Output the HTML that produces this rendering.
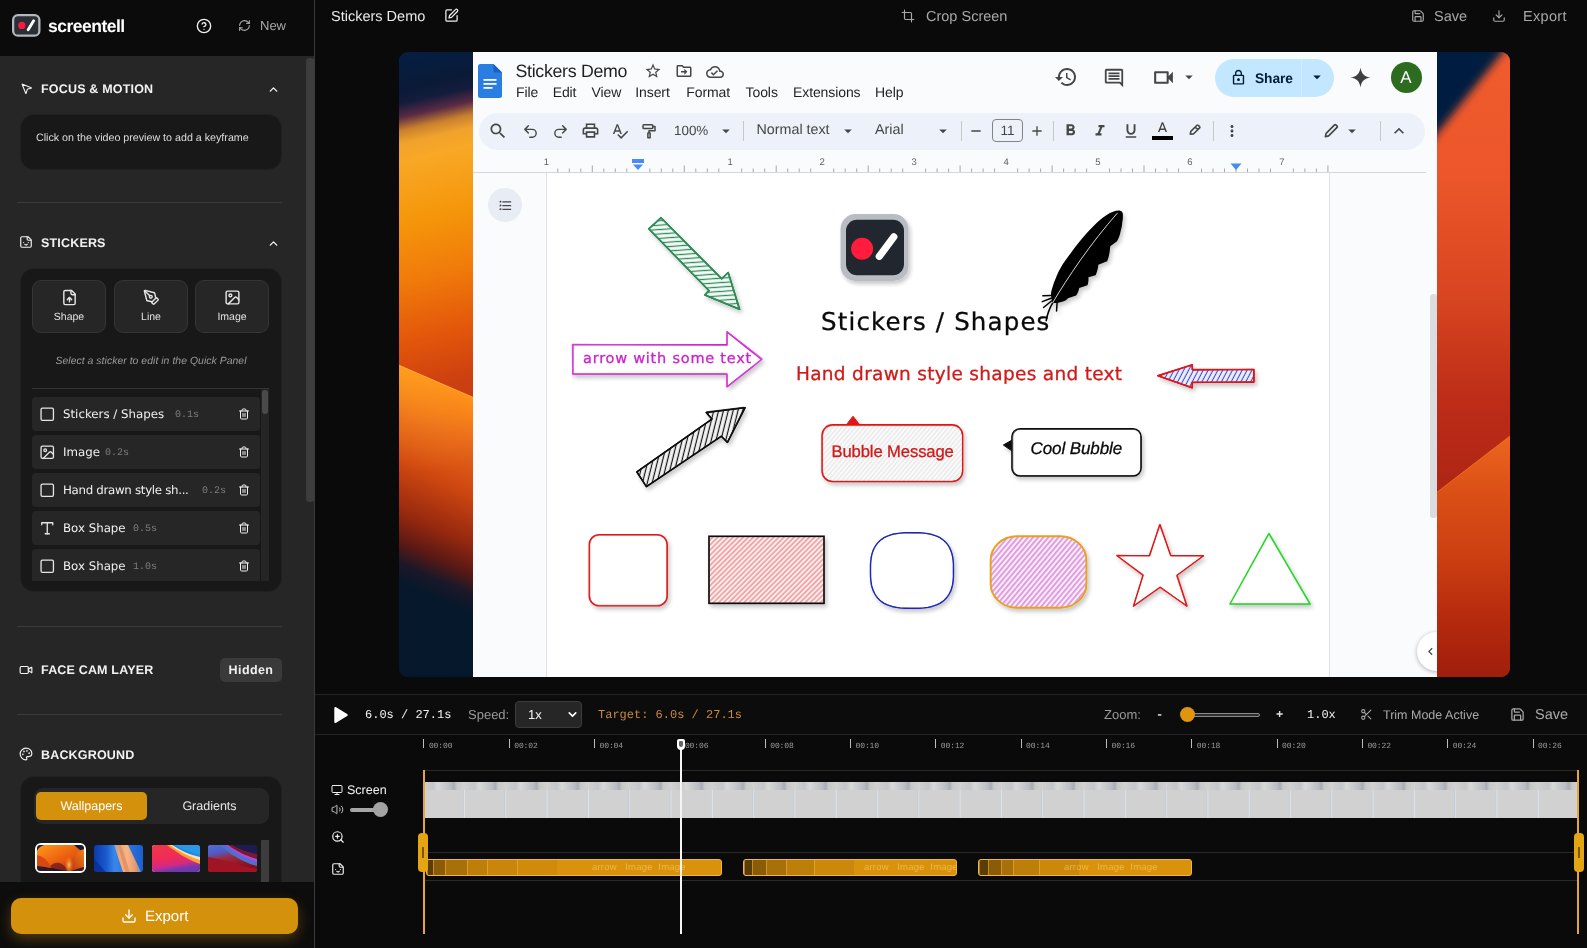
<!DOCTYPE html>
<html lang="en">
<head>
<meta charset="utf-8">
<title>screentell - Stickers Demo</title>
<style>
*{box-sizing:border-box;margin:0;padding:0}
html,body{width:1587px;height:948px;overflow:hidden;background:#0a0a0a}
body{font-family:"Liberation Sans",sans-serif;color:#e5e5e5;position:relative;-webkit-font-smoothing:antialiased;text-rendering:geometricPrecision}
#root{position:absolute;left:0;top:0;width:1587px;height:948px;will-change:transform;transform:translateZ(0)}
.abs{position:absolute}
.mono{font-family:"Liberation Mono",monospace}
svg{display:block;overflow:visible}
.ic{position:absolute;fill:none;stroke:currentColor;stroke-width:2;stroke-linecap:round;stroke-linejoin:round}
/* ---------- sidebar ---------- */
#side{position:absolute;left:0;top:0;width:315px;height:948px;background:#262626;border-right:1px solid #3a3a3a}
#shead{position:absolute;left:0;top:0;width:314px;height:56px;background:#0b0b0b}
#sscroll{position:absolute;left:306px;top:56px;width:8px;height:826px;background:transparent}
#sscroll i{position:absolute;left:0;top:2px;width:9px;height:444px;background:#3d3d3d;border-radius:4px}
.stitle{position:absolute;left:41px;font-weight:700;font-size:12.5px;letter-spacing:.18px;color:#f2f2f2;white-space:nowrap;line-height:16px}
.card{position:absolute;left:20px;width:261.500px;background:#181818;border:1px solid #202020;border-radius:14px}
.hr{position:absolute;left:17px;width:265px;height:1px;background:#3a3a3a}
.sbtn{position:absolute;top:280px;width:74px;height:53px;background:#262626;border:1px solid #353535;border-radius:9px}
.sbtn span{position:absolute;left:0;right:0;top:29px;text-align:center;font-size:10.5px;color:#e0e0e0;line-height:14px}
.li{position:absolute;left:32px;width:228px;height:34px;background:#262626;border-radius:4px}
.li .nm{position:absolute;left:31px;top:9px;font-family:"DejaVu Sans","Liberation Sans",sans-serif;font-size:11.8px;line-height:16px;color:#f0f0f0;white-space:nowrap;letter-spacing:0}
.li .tm{position:absolute;top:11.5px;font-family:"Liberation Mono",monospace;font-size:10px;line-height:14px;color:#7d7d7d}
.li svg.c{left:6.750px;top:8.750px;width:16.500px;height:16.500px;color:#e6e6e6;stroke-width:1.9}
.li svg.t{left:206px;top:11px;width:12px;height:12px;color:#f0f0f0}
/* ---------- top bar ---------- */
.tb{position:absolute;top:8.500px;font-size:14.5px;line-height:17px;color:#d6d6d6;white-space:nowrap}
/* ---------- controls ---------- */
#ctl{position:absolute;left:315px;top:694px;width:1272px;height:41px;border-top:1px solid #232323;border-bottom:1px solid #232323;background:#0c0c0c}
.ct{position:absolute;white-space:nowrap;line-height:16px}
.tick{position:absolute;top:739px;width:1px;height:9px;background:#bdbdbd}
.tl{position:absolute;top:740px;font-family:"Liberation Mono",monospace;font-size:8px;line-height:11px;color:#9a9a9a;letter-spacing:-.1px}
.clip{position:absolute;top:859px;height:17px;background:#d9920b;border:1px solid #f0b545;border-radius:3px;overflow:hidden}
.hw{font-family:"DejaVu Sans","Liberation Sans",sans-serif;-webkit-text-stroke:.3px currentColor}
</style>
</head>
<body>
<div id="root">

<!-- ================= SIDEBAR ================= -->
<div id="side">
  <div id="shead">
    <!-- logo -->
    <svg class="abs" style="left:12px;top:14px" width="28.500" height="22.800" viewBox="0 0 30 24">
      <rect x="1.2" y="1.2" width="27.6" height="21.6" rx="5" fill="#2a2f36" stroke="#b4b7bc" stroke-width="2.400"/>
      <circle cx="10.3" cy="12" r="3.8" fill="#ff1744"/>
      <path d="M17 16.6 L22.8 7.2" stroke="#fff" stroke-width="3" stroke-linecap="round"/>
    </svg>
    <div class="abs" style="left:48px;top:15.500px;font-weight:700;font-size:17.5px;line-height:20px;color:#fff;letter-spacing:-.5px">screentell</div>
    <svg class="ic" style="left:196px;top:18px;width:16px;height:16px;color:#f0f0f0" viewBox="0 0 24 24"><circle cx="12" cy="12" r="10"/><path d="M9.1 9a3 3 0 0 1 5.8 1c0 2-3 3-3 3"/><path d="M12 17h.01"/></svg>
    <svg class="ic" style="left:238px;top:19px;width:13px;height:13px;color:#a8a8a8" viewBox="0 0 24 24"><path d="M3 12a9 9 0 0 1 9-9 9.75 9.75 0 0 1 6.74 2.74L21 8"/><path d="M21 3v5h-5"/><path d="M21 12a9 9 0 0 1-9 9 9.75 9.75 0 0 1-6.74-2.74L3 16"/><path d="M8 16H3v5"/></svg>
    <div class="abs" style="left:260px;top:18px;font-size:13px;line-height:16px;color:#a8a8a8">New</div>
  </div>
  <div id="sscroll"><i></i></div>

  <!-- focus & motion -->
  <svg class="ic" style="left:20px;top:82px;width:13px;height:13px;color:#f2f2f2" viewBox="0 0 24 24"><path d="M4.04 4.69a.5.5 0 0 1 .65-.65l16 6.5a.5.5 0 0 1-.06.95l-6.13 1.58a2 2 0 0 0-1.43 1.43l-1.58 6.13a.5.5 0 0 1-.95.06z"/></svg>
  <div class="stitle" style="top:81px">FOCUS &amp; MOTION</div>
  <svg class="ic" style="left:267px;top:83px;width:13px;height:13px;color:#f2f2f2;stroke-width:2.6" viewBox="0 0 24 24"><path d="m18 15-6-6-6 6"/></svg>
  <div class="card" style="top:114px;height:56px"></div>
  <div class="abs" style="left:36px;top:130px;font-size:10.7px;line-height:14px;color:#dcdcdc;white-space:nowrap;margin-top:1px">Click on the video preview to add a keyframe</div>
  <div class="hr" style="top:202px"></div>

  <!-- stickers -->
  <svg class="ic" style="left:19px;top:235px;width:14px;height:14px;color:#f2f2f2" viewBox="0 0 24 24"><path d="M15.5 3H5a2 2 0 0 0-2 2v14c0 1.1.9 2 2 2h14a2 2 0 0 0 2-2V8.5L15.5 3Z"/><path d="M14 3v4a2 2 0 0 0 2 2h4"/><path d="M8 13h.01"/><path d="M16 13h.01"/><path d="M10 16s.8 1 2 1c1.3 0 2-1 2-1"/></svg>
  <div class="stitle" style="top:235px">STICKERS</div>
  <svg class="ic" style="left:267px;top:237px;width:13px;height:13px;color:#f2f2f2;stroke-width:2.6" viewBox="0 0 24 24"><path d="m18 15-6-6-6 6"/></svg>
  <div class="card" style="top:268px;height:324px"></div>

  <div class="sbtn" style="left:32px"><svg class="ic" style="left:28px;top:8px;width:17px;height:17px;color:#e6e6e6" viewBox="0 0 24 24"><path d="M15 2H6a2 2 0 0 0-2 2v16a2 2 0 0 0 2 2h12a2 2 0 0 0 2-2V7Z"/><path d="M14 2v4a2 2 0 0 0 2 2h4"/><path d="M12 12v6"/><path d="m15 15-3-3-3 3"/></svg><span>Shape</span></div>
  <div class="sbtn" style="left:114px"><svg class="ic" style="left:28px;top:8px;width:17px;height:17px;color:#e6e6e6" viewBox="0 0 24 24"><path d="M15.700 21.300a1 1 0 0 1-1.400 0l-1.600-1.600a1 1 0 0 1 0-1.400l5.600-5.600a1 1 0 0 1 1.400 0l1.600 1.600a1 1 0 0 1 0 1.400z"/><path d="m18 13-1.400-6.900a1 1 0 0 0-.700-.800L3.200 2a1 1 0 0 0-1.200 1.200l3.300 12.700a1 1 0 0 0 .800.700L13 18"/><path d="m2.300 2.300 7.300 7.300"/><circle cx="11" cy="11" r="2"/></svg><span>Line</span></div>
  <div class="sbtn" style="left:195px"><svg class="ic" style="left:28px;top:8px;width:17px;height:17px;color:#e6e6e6" viewBox="0 0 24 24"><rect x="3" y="3" width="18" height="18" rx="2"/><circle cx="9" cy="9" r="2"/><path d="m21 15-3.1-3.1a2 2 0 0 0-2.8 0L6 21"/></svg><span>Image</span></div>

  <div class="abs" style="left:20px;width:262px;top:354.5px;text-align:center;font-style:italic;font-size:10.4px;line-height:14px;color:#9b9b9b;letter-spacing:.05px">Select a sticker to edit in the Quick Panel</div>
  <div class="abs" style="left:32px;top:388px;width:237px;height:1px;background:#333"></div>
  <div class="abs" style="left:261px;top:389px;width:8px;height:192px;background:#252525"></div>
  <div class="abs" style="left:262px;top:390px;width:6px;height:24px;background:#4a4a4a;border-radius:3px"></div>

  <div class="li" style="top:397px"><svg class="ic c" viewBox="0 0 24 24"><rect x="3" y="3" width="18" height="18" rx="2"/></svg><span class="nm">Stickers / Shapes</span><span class="tm" style="left:143px">0.1s</span><svg class="ic t" viewBox="0 0 24 24"><path d="M3 6h18"/><path d="M19 6v14c0 1-1 2-2 2H7c-1 0-2-1-2-2V6"/><path d="M8 6V4c0-1 1-2 2-2h4c1 0 2 1 2 2v2"/><path d="M10 11v6"/><path d="M14 11v6"/></svg></div>
  <div class="li" style="top:435px"><svg class="ic c" viewBox="0 0 24 24"><rect x="3" y="3" width="18" height="18" rx="2"/><circle cx="9" cy="9" r="2"/><path d="m21 15-3.1-3.1a2 2 0 0 0-2.8 0L6 21"/></svg><span class="nm">Image</span><span class="tm" style="left:73px">0.2s</span><svg class="ic t" viewBox="0 0 24 24"><path d="M3 6h18"/><path d="M19 6v14c0 1-1 2-2 2H7c-1 0-2-1-2-2V6"/><path d="M8 6V4c0-1 1-2 2-2h4c1 0 2 1 2 2v2"/><path d="M10 11v6"/><path d="M14 11v6"/></svg></div>
  <div class="li" style="top:473px"><svg class="ic c" viewBox="0 0 24 24"><rect x="3" y="3" width="18" height="18" rx="2"/></svg><span class="nm" style="letter-spacing:-.3px">Hand drawn style sh...</span><span class="tm" style="left:170px">0.2s</span><svg class="ic t" viewBox="0 0 24 24"><path d="M3 6h18"/><path d="M19 6v14c0 1-1 2-2 2H7c-1 0-2-1-2-2V6"/><path d="M8 6V4c0-1 1-2 2-2h4c1 0 2 1 2 2v2"/><path d="M10 11v6"/><path d="M14 11v6"/></svg></div>
  <div class="li" style="top:511px"><svg class="ic c" viewBox="0 0 24 24"><path d="M4 7V4h16v3"/><path d="M9 20h6"/><path d="M12 4v16"/></svg><span class="nm">Box Shape</span><span class="tm" style="left:101px">0.5s</span><svg class="ic t" viewBox="0 0 24 24"><path d="M3 6h18"/><path d="M19 6v14c0 1-1 2-2 2H7c-1 0-2-1-2-2V6"/><path d="M8 6V4c0-1 1-2 2-2h4c1 0 2 1 2 2v2"/><path d="M10 11v6"/><path d="M14 11v6"/></svg></div>
  <div class="li" style="top:549px;height:32px;border-radius:4px 4px 0 0"><svg class="ic c" viewBox="0 0 24 24"><rect x="3" y="3" width="18" height="18" rx="2"/></svg><span class="nm">Box Shape</span><span class="tm" style="left:101px">1.0s</span><svg class="ic t" viewBox="0 0 24 24"><path d="M3 6h18"/><path d="M19 6v14c0 1-1 2-2 2H7c-1 0-2-1-2-2V6"/><path d="M8 6V4c0-1 1-2 2-2h4c1 0 2 1 2 2v2"/><path d="M10 11v6"/><path d="M14 11v6"/></svg></div>

  <div class="hr" style="top:626px"></div>
  <!-- face cam -->
  <svg class="ic" style="left:19px;top:663px;width:14px;height:14px;color:#f2f2f2" viewBox="0 0 24 24"><path d="m16 13 5.2 3.5a.5.5 0 0 0 .8-.4V7.9a.5.5 0 0 0-.8-.4L16 10.5"/><rect x="2" y="6" width="14" height="12" rx="2"/></svg>
  <div class="stitle" style="top:662px">FACE CAM LAYER</div>
  <div class="abs" style="left:220px;top:658px;width:62px;height:24px;background:#3a3a3a;border-radius:5px;text-align:center;font-weight:700;font-size:12.5px;line-height:24px;color:#f0f0f0;letter-spacing:.4px">Hidden</div>
  <div class="hr" style="top:714px"></div>
  <!-- background -->
  <svg class="ic" style="left:19px;top:747px;width:14px;height:14px;color:#f2f2f2" viewBox="0 0 24 24"><circle cx="13.5" cy="6.5" r=".5" fill="currentColor"/><circle cx="17.5" cy="10.5" r=".5" fill="currentColor"/><circle cx="8.5" cy="7.5" r=".5" fill="currentColor"/><circle cx="6.5" cy="12.5" r=".5" fill="currentColor"/><path d="M12 2C6.5 2 2 6.5 2 12s4.5 10 10 10c.9 0 1.6-.7 1.6-1.7 0-.4-.2-.8-.4-1.1-.3-.3-.4-.7-.4-1.1a1.6 1.6 0 0 1 1.6-1.7h2c3 0 5.600-2.500 5.600-5.600C22 6 17.500 2 12 2z"/></svg>
  <div class="stitle" style="top:747px">BACKGROUND</div>
  <div class="card" style="top:776px;height:130px"></div>
  <div class="abs" style="left:34px;top:788px;width:235px;height:36px;background:#262626;border-radius:9px"></div>
  <div class="abs" style="left:36px;top:792px;width:111px;height:28px;background:#d4910c;border-radius:5px;text-align:center;font-size:12.5px;line-height:28px;color:#fff">Wallpapers</div>
  <div class="abs" style="left:150px;top:792px;width:119px;height:28px;text-align:center;font-size:12.5px;line-height:28px;color:#e6e6e6">Gradients</div>
  <!-- thumbs -->
  <div class="abs" style="left:35px;top:843px;width:51px;height:30px;border:2px solid #fff;border-radius:6px;overflow:hidden;background:#141a38">
    <svg width="47" height="26" viewBox="0 0 47 26"><defs><linearGradient id="t1a" x1="0" y1="0" x2="1" y2="1"><stop offset="0" stop-color="#ff9a1a"/><stop offset=".6" stop-color="#e8560f"/><stop offset="1" stop-color="#8a1f10"/></linearGradient><linearGradient id="t1b" x1="1" y1="0" x2="0" y2="1"><stop offset="0" stop-color="#f5821a"/><stop offset="1" stop-color="#b8300f"/></linearGradient><radialGradient id="t1c" cx=".5" cy=".5" r=".5"><stop offset="0" stop-color="#ffc060"/><stop offset="1" stop-color="#f07818" stop-opacity="0"/></radialGradient></defs>
    <rect width="47" height="26" fill="url(#t1a)"/><path d="M0 0 L7 0 C4 1 1 3 0 6Z" fill="#151a3a"/><path d="M37 0 L47 0 L47 7 C43 5 40 3 37 0Z" fill="#151a3a"/><path d="M47 4 C40 6 33 14 32 26 L47 26Z" fill="url(#t1b)"/><path d="M10 26 C14 17 24 13 31 26Z" fill="#6a1820" opacity=".75"/><path d="M0 10 C8 12 14 19 15 26 L0 26Z" fill="#d8480f"/><ellipse cx="32" cy="20" rx="4.500" ry="9" fill="url(#t1c)"/><path d="M0 21 C10 22 22 24.500 30 26 L0 26Z" fill="#1a1430" opacity=".9"/><path d="M34 26 C38 24.500 43 23 47 22 L47 26Z" fill="#1a1430" opacity=".8"/></svg>
  </div>
  <div class="abs" style="left:93.500px;top:844.500px;width:49px;height:27px;border-radius:3px;overflow:hidden">
    <svg width="49" height="27" viewBox="0 0 49 27"><defs><linearGradient id="t2a" x1="0" y1="0" x2="1" y2="0"><stop offset="0" stop-color="#0a3aa8"/><stop offset=".25" stop-color="#1a5ad0"/><stop offset=".42" stop-color="#3a86e8"/><stop offset="1" stop-color="#1a60d0"/></linearGradient><linearGradient id="t2b" x1="0" y1="0" x2="1" y2="0"><stop offset="0" stop-color="#7aa0e0"/><stop offset=".2" stop-color="#f0a878"/><stop offset=".5" stop-color="#f5b488"/><stop offset=".8" stop-color="#e89868"/><stop offset="1" stop-color="#5a90e0"/></linearGradient></defs>
    <rect width="49" height="27" fill="url(#t2a)"/><path d="M20 0 L34 0 L47 27 L29 27Z" fill="url(#t2b)"/><path d="M24 0 L27 0 L36 27 L31 27Z" fill="#e08858" opacity=".7"/><path d="M0 14 L12 27 L0 27Z" fill="#0a2e90" opacity=".7"/></svg>
  </div>
  <div class="abs" style="left:151.500px;top:844.500px;width:48px;height:27px;border-radius:3px;overflow:hidden">
    <svg width="48" height="27" viewBox="0 0 48 27"><defs><linearGradient id="t3a" x1="0" y1="0" x2=".3" y2="1"><stop offset="0" stop-color="#f0384a"/><stop offset=".55" stop-color="#f02a58"/><stop offset=".8" stop-color="#d02a88"/><stop offset="1" stop-color="#6a3ab0"/></linearGradient></defs>
    <rect width="48" height="27" fill="#1a8ae0"/><path d="M22 0 C30 4 40 8 48 10 L48 0Z" fill="#2a98e8"/><path d="M0 0 L20 0 C28 5 38 10 48 12 L48 27 L0 27Z" fill="#f8e0c0"/><path d="M0 0 L18 0 C26 6 38 12 48 15 L48 27 L0 27Z" fill="#ffa030"/><path d="M0 0 L15 0 C24 7 36 15 48 19 L48 27 L0 27Z" fill="url(#t3a)"/></svg>
  </div>
  <div class="abs" style="left:208px;top:844.500px;width:49px;height:27px;border-radius:3px;overflow:hidden">
    <svg width="49" height="27" viewBox="0 0 49 27"><defs><linearGradient id="t4a" x1="0" y1="0" x2=".4" y2="1"><stop offset="0" stop-color="#5a6ad0"/><stop offset=".3" stop-color="#4a5ec8"/><stop offset=".55" stop-color="#a0283a"/><stop offset="1" stop-color="#8a0c18"/></linearGradient></defs>
    <rect width="49" height="27" fill="#1c1c52"/><path d="M24 0 C32 5 42 8 49 9 L49 17 C40 14 30 8 20 0Z" fill="#7a1a30"/><path d="M0 0 L20 0 C28 6 40 12 49 14 L49 27 L0 27Z" fill="#b04ad8"/><path d="M0 0 L17 0 C26 7 38 14 49 17 L49 27 L0 27Z" fill="#4a70d0"/><path d="M0 0 L12 0 C20 8 34 17 49 21 L49 27 L0 27Z" fill="url(#t4a)"/><path d="M0 12 C14 14 30 20 49 24 L49 27 L0 27Z" fill="#a01424"/></svg>
  </div>
  <div class="abs" style="left:261px;top:840px;width:8px;height:42px;background:#3d3d3d"></div>

  <!-- bottom export -->
  <div class="abs" style="left:0;top:882px;width:314px;height:66px;background:#0d0d0d"></div>
  <div class="abs" style="left:11px;top:898px;width:287px;height:36px;background:#d4910c;border-radius:10px;box-shadow:0 5px 14px -1px rgba(212,145,12,.38)"></div>
  <svg class="ic" style="left:121px;top:908px;width:16px;height:16px;color:#fff" viewBox="0 0 24 24"><path d="M21 15v4a2 2 0 0 1-2 2H5a2 2 0 0 1-2-2v-4"/><path d="m7 10 5 5 5-5"/><path d="M12 15V3"/></svg>
  <div class="abs" style="left:145px;top:908px;font-size:15px;line-height:18px;color:#fff;letter-spacing:0">Export</div>
</div>

<!-- ================= TOP BAR ================= -->
<div class="tb" style="left:331px;color:#e8e8e8">Stickers Demo</div>
<svg class="ic" style="left:444px;top:8px;width:15px;height:15px;color:#f0f0f0" viewBox="0 0 24 24"><path d="M12 3H5a2 2 0 0 0-2 2v14a2 2 0 0 0 2 2h14a2 2 0 0 0 2-2v-7"/><path d="M18.4 2.6a2.1 2.1 0 1 1 3 3L12 15l-4 1 1-4Z"/></svg>
<svg class="ic" style="left:901px;top:9px;width:14px;height:14px;color:#a8a8a8" viewBox="0 0 24 24"><path d="M6 2v14a2 2 0 0 0 2 2h14"/><path d="M18 22V8a2 2 0 0 0-2-2H2"/></svg>
<div class="tb" style="left:926px;color:#a8a8a8">Crop Screen</div>
<svg class="ic" style="left:1411px;top:9px;width:14px;height:14px;color:#a8a8a8" viewBox="0 0 24 24"><path d="M15.2 3a2 2 0 0 1 1.400.6l3.800 3.800a2 2 0 0 1 .6 1.400V19a2 2 0 0 1-2 2H5a2 2 0 0 1-2-2V5a2 2 0 0 1 2-2z"/><path d="M17 21v-7a1 1 0 0 0-1-1H8a1 1 0 0 0-1 1v7"/><path d="M7 3v4a1 1 0 0 0 1 1h7"/></svg>
<div class="tb" style="left:1434px;color:#a8a8a8">Save</div>
<svg class="ic" style="left:1492px;top:9px;width:14px;height:14px;color:#a8a8a8" viewBox="0 0 24 24"><path d="M21 15v4a2 2 0 0 1-2 2H5a2 2 0 0 1-2-2v-4"/><path d="m7 10 5 5 5-5"/><path d="M12 15V3"/></svg>
<div class="tb" style="left:1523px;color:#a8a8a8;letter-spacing:.3px">Export</div>

<!-- ================= VIDEO ================= -->
<div id="video" class="abs" style="left:399px;top:52px;width:1111px;height:625px;border-radius:9px;overflow:hidden;background:#06182b">
<!--WS-->
<svg class="abs" style="left:0;top:0" width="1111" height="625" viewBox="0 0 1111 625">
  <defs>
    <linearGradient id="wl1" x1="0" y1="0" x2="0" y2="1" gradientUnits="objectBoundingBox">
      <stop offset="0" stop-color="#05214a"/><stop offset=".1" stop-color="#061d40"/><stop offset=".165" stop-color="#0a1a36"/><stop offset=".2" stop-color="#141c3c"/><stop offset=".235" stop-color="#5a2a44"/><stop offset=".268" stop-color="#c8802e"/><stop offset=".3" stop-color="#f0a22c"/><stop offset=".345" stop-color="#f8a826"/><stop offset=".5" stop-color="#f5960a"/><stop offset=".65" stop-color="#f07a0a"/><stop offset=".8" stop-color="#e2560b"/><stop offset=".92" stop-color="#cd4010"/><stop offset="1" stop-color="#c73c10"/>
    </linearGradient>
    <linearGradient id="wl2" x1="0" y1="0" x2="0" y2="1">
      <stop offset="0" stop-color="#ff9018"/><stop offset=".06" stop-color="#f67e18"/><stop offset=".15" stop-color="#e6641a"/><stop offset=".29" stop-color="#d04810"/><stop offset=".445" stop-color="#96280f"/><stop offset=".536" stop-color="#5a1914"/><stop offset=".6" stop-color="#1a1828"/><stop offset=".66" stop-color="#06182b"/><stop offset="1" stop-color="#05182b"/>
    </linearGradient>
    <radialGradient id="wl3" gradientUnits="userSpaceOnUse" cx="0" cy="5" r="95"><stop offset="0" stop-color="#ffa822" stop-opacity=".55"/><stop offset="1" stop-color="#ffa020" stop-opacity="0"/></radialGradient>
    <linearGradient id="wr1" x1="0" y1="0" x2="0" y2="1">
      <stop offset="0" stop-color="#f05c2e"/><stop offset=".2" stop-color="#ec562a"/><stop offset=".4" stop-color="#d74420"/><stop offset=".55" stop-color="#be2d18"/><stop offset=".68" stop-color="#b02614"/><stop offset="1" stop-color="#a82212"/>
    </linearGradient>
    <linearGradient id="wr2" x1="0" y1="0" x2="0" y2="1">
      <stop offset="0" stop-color="#ec661e"/><stop offset=".25" stop-color="#da4e16"/><stop offset=".5" stop-color="#cc3f12"/><stop offset=".76" stop-color="#b52a0d"/><stop offset="1" stop-color="#a01e0c"/>
    </linearGradient>
    <filter id="bl4" x="-20%" y="-20%" width="140%" height="140%"><feGaussianBlur stdDeviation="4"/></filter>
    <filter id="bl1"><feGaussianBlur stdDeviation=".6"/></filter>
  </defs>
  <rect width="1111" height="625" fill="#05182b"/>
  <!-- left strip -->
  <g transform="translate(0,12) skewY(-13)"><rect x="-2" y="-40" width="90" height="400" fill="url(#wl1)"/></g>
  <g transform="translate(0,313) skewY(23.4)"><rect x="-2" y="0" width="90" height="330" fill="url(#wl2)"/><rect x="-2" y="0" width="100" height="120" fill="url(#wl3)"/><rect x="-2" y="-.2" width="90" height="1.2" fill="#ffb050" opacity=".6"/></g>
  <!-- right strip -->
  <rect x="1030" y="0" width="81" height="625" fill="url(#wr1)"/>
  <polygon points="1037,441 1111,384 1111,625 1037,625" fill="url(#wr2)"/>
  <path d="M1037 441 L1111 384" stroke="#ff8a30" stroke-width="1" opacity=".55"/>
  <polygon points="990,-10 1112,-10 990,141" fill="#041c40" filter="url(#bl4)"/>
</svg>
<!--WE-->
<!--DS-->
<div class="abs" id="docs" style="left:-399px;top:-52px;width:1587px;height:948px;font-family:'Liberation Sans',sans-serif">
<div class="abs" style="left:473px;top:52px;width:964px;height:625px;background:#f9fbfd"></div>
<div class="abs" style="left:546px;top:172px;width:784px;height:505px;background:#fff;border-left:1px solid #dfe1e5;border-right:1px solid #dfe1e5"></div>
<svg class="abs" style="left:478px;top:64px" width="24" height="34" viewBox="0 0 24 34"><path d="M2.500 0H15.500L24 8.500V31.500a2.500 2.500 0 0 1-2.500 2.500H2.500A2.500 2.500 0 0 1 0 31.500V2.500A2.500 2.500 0 0 1 2.500 0Z" fill="#2a7de1"/><path d="M15.500 0 24 8.500H17.500a2 2 0 0 1-2-2Z" fill="#1a5fc4"/><rect x="5.500" y="15" width="13" height="1.800" fill="#fff"/><rect x="5.500" y="19" width="13" height="1.800" fill="#fff"/><rect x="5.500" y="23" width="9" height="1.800" fill="#fff"/></svg>
<div class="abs" style="left:515.5px;top:60.5px;font-size:17.8px;line-height:21px;color:#1f1f1f;white-space:nowrap;letter-spacing:-.3px">Stickers Demo</div>
<svg class="abs" style="left:644.0px;top:62.0px" width="18" height="18" viewBox="0 0 24 24"><path fill="#444746" d="M22 9.240l-7.190-.620L12 2 9.190 8.630 2 9.240l5.460 4.730L5.820 21 12 17.270 18.180 21l-1.630-7.030L22 9.240zM12 15.400l-3.760 2.270 1-4.280-3.320-2.880 4.380-.380L12 6.100l1.710 4.040 4.380.380-3.320 2.880 1 4.280L12 15.400z"/></svg>
<svg class="abs" style="left:675.0px;top:62.0px" width="18" height="18" viewBox="0 0 24 24"><path fill="#444746" d="M20 6h-8l-2-2H4c-1.100 0-2 .9-2 2v12c0 1.100.9 2 2 2h16c1.100 0 2-.9 2-2V8c0-1.100-.9-2-2-2zm0 12H4V6h5.170l2 2H20v10zm-7.500-1l4-4-4-4v3H8v2h4.500v3z"/></svg>
<svg class="abs" style="left:706.0px;top:62.5px" width="18" height="18" viewBox="0 0 24 24"><path fill="#444746" d="M19.350 10.040C18.670 6.590 15.640 4 12 4 9.110 4 6.600 5.640 5.350 8.040 2.340 8.360 0 10.910 0 14c0 3.310 2.690 6 6 6h13c2.760 0 5-2.240 5-5 0-2.640-2.050-4.780-4.650-4.960zM19 18H6c-2.210 0-4-1.790-4-4 0-2.050 1.530-3.760 3.560-3.970l1.070-.110.500-.950C8.080 7.140 9.940 6 12 6c2.620 0 4.880 1.860 5.390 4.430l.300 1.500 1.530.110c1.560.100 2.780 1.410 2.780 2.960 0 1.650-1.350 3-3 3zm-9-3.820l-2.090-2.090L6.500 13.500 10 17l6.010-6.010-1.410-1.410z"/></svg>
<div class="abs" style="left:516px;top:83.5px;font-size:14px;line-height:17px;color:#1f1f1f;white-space:nowrap;letter-spacing:-.1px">File</div>
<div class="abs" style="left:552.7px;top:83.5px;font-size:14px;line-height:17px;color:#1f1f1f;white-space:nowrap;letter-spacing:-.1px">Edit</div>
<div class="abs" style="left:591.6px;top:83.5px;font-size:14px;line-height:17px;color:#1f1f1f;white-space:nowrap;letter-spacing:-.1px">View</div>
<div class="abs" style="left:635.3px;top:83.5px;font-size:14px;line-height:17px;color:#1f1f1f;white-space:nowrap;letter-spacing:-.1px">Insert</div>
<div class="abs" style="left:686.3px;top:83.5px;font-size:14px;line-height:17px;color:#1f1f1f;white-space:nowrap;letter-spacing:-.1px">Format</div>
<div class="abs" style="left:745.6px;top:83.5px;font-size:14px;line-height:17px;color:#1f1f1f;white-space:nowrap;letter-spacing:-.1px">Tools</div>
<div class="abs" style="left:793px;top:83.5px;font-size:14px;line-height:17px;color:#1f1f1f;white-space:nowrap;letter-spacing:-.1px">Extensions</div>
<div class="abs" style="left:875px;top:83.5px;font-size:14px;line-height:17px;color:#1f1f1f;white-space:nowrap;letter-spacing:-.1px">Help</div>
<svg class="abs" style="left:1054.0px;top:65.0px" width="24" height="24" viewBox="0 0 24 24"><path fill="#444746" d="M13 3c-4.970 0-9 4.030-9 9H1l3.890 3.890.07.140L9 12H6c0-3.870 3.130-7 7-7s7 3.130 7 7-3.130 7-7 7c-1.930 0-3.680-.790-4.940-2.060l-1.420 1.420C8.270 19.990 10.510 21 13 21c4.970 0 9-4.030 9-9s-4.030-9-9-9zm-1 5v5l4.280 2.540.720-1.210-3.500-2.080V8H12z"/></svg>
<svg class="abs" style="left:1103.0px;top:67.0px" width="22" height="22" viewBox="0 0 24 24"><path fill="#444746" d="M21.990 4c0-1.100-.890-2-1.990-2H4c-1.100 0-2 .9-2 2v12c0 1.100.9 2 2 2h14l4 4-.010-18zM20 4v13.170L18.830 16H4V4h16zM6 12h12v2H6zm0-3h12v2H6zm0-3h12v2H6z"/></svg>
<svg class="abs" style="left:1150.5px;top:64.5px" width="25" height="25" viewBox="0 0 24 24"><path fill="#444746" d="M15 8v8H5V8h10m1-2H4c-.550 0-1 .450-1 1v10c0 .550.450 1 1 1h12c.550 0 1-.450 1-1v-3.500l4 4v-11l-4 4V7c0-.550-.450-1-1-1z"/></svg>
<svg class="abs" style="left:1180.0px;top:68.0px" width="18" height="18" viewBox="0 0 24 24"><path fill="#444746" d="M7 10l5 5 5-5z"/></svg>
<div class="abs" style="left:1214.500px;top:58.500px;width:119px;height:38px;border-radius:19px;background:#c2e7ff"></div>
<div class="abs" style="left:1301px;top:58.500px;width:1px;height:38px;background:#d3edff"></div>
<svg class="abs" style="left:1230.0px;top:68.5px" width="17" height="17" viewBox="0 0 24 24"><path fill="#001d35" d="M18 8h-1V6c0-2.760-2.240-5-5-5S7 3.240 7 6v2H6c-1.100 0-2 .9-2 2v10c0 1.100.9 2 2 2h12c1.100 0 2-.9 2-2V10c0-1.100-.9-2-2-2zM9 6c0-1.660 1.340-3 3-3s3 1.340 3 3v2H9V6zm9 14H6V10h12v10zm-6-3c1.100 0 2-.9 2-2s-.9-2-2-2-2 .9-2 2 .9 2 2 2z"/></svg>
<div class="abs" style="left:1255px;top:69.5px;font-size:13.8px;line-height:17px;color:#001d35;white-space:nowrap;font-weight:700;letter-spacing:-.1px">Share</div>
<svg class="abs" style="left:1308.0px;top:68.0px" width="18" height="18" viewBox="0 0 24 24"><path fill="#001d35" d="M7 10l5 5 5-5z"/></svg>
<svg class="abs" style="left:1348.5px;top:66.0px" width="23" height="23" viewBox="0 0 24 24"><path fill="#3c4043" d="M12 1.500C12.900 8 16 11.100 22.500 12 16 12.900 12.900 16 12 22.500 11.100 16 8 12.900 1.500 12 8 11.100 11.100 8 12 1.500Z"/></svg>
<div class="abs" style="left:1390.500px;top:62px;width:31px;height:31px;border-radius:50%;background:#2d6b1e;color:#fff;text-align:center;font-size:17px;line-height:31px">A</div>
<div class="abs" style="left:479px;top:112.500px;width:946px;height:37.500px;border-radius:19px;background:#edf2fa"></div>
<svg class="abs" style="left:488.0px;top:120.5px" width="20" height="20" viewBox="0 0 24 24"><path fill="#444746" d="M15.5 14h-.79l-.28-.27C15.41 12.59 16 11.11 16 9.5 16 5.91 13.09 3 9.5 3S3 5.91 3 9.5 5.91 16 9.5 16c1.61 0 3.09-.59 4.23-1.57l.27.28v.79l5 4.99L20.49 19l-4.99-5zm-6 0C7.01 14 5 11.99 5 9.5S7.01 5 9.5 5 14 7.01 14 9.5 11.99 14 9.5 14z"/></svg>
<svg class="abs" style="left:522.0px;top:122.5px" width="17" height="17" viewBox="0 0 24 24"><path fill="none" stroke="#444746" stroke-width="2" stroke-linecap="round" stroke-linejoin="round" d="M9 14 4 9l5-5 M4 9h10.500a5.500 5.500 0 0 1 0 11H11"/></svg>
<svg class="abs" style="left:551.5px;top:122.5px" width="17" height="17" viewBox="0 0 24 24"><path fill="none" stroke="#444746" stroke-width="2" stroke-linecap="round" stroke-linejoin="round" d="m15 14 5-5-5-5 M20 9H9.500a5.500 5.500 0 0 0 0 11H13"/></svg>
<svg class="abs" style="left:580.5px;top:121.0px" width="19" height="19" viewBox="0 0 24 24"><path fill="#444746" d="M19 8h-1V3H6v5H5c-1.66 0-3 1.34-3 3v6h4v4h12v-4h4v-6c0-1.66-1.34-3-3-3zM8 5h8v3H8V5zm8 14H8v-4h8v4zm4-4h-2v-2H6v2H4v-4c0-.55.45-1 1-1h14c.55 0 1 .45 1 1v4z"/></svg>
<svg class="abs" style="left:610.6px;top:121.5px" width="18" height="18" viewBox="0 0 24 24"><path fill="#444746" d="M12.45 16h2.09L9.43 3H7.57L2.46 16h2.09l1.12-3h5.64l1.14 3zm-6.02-5L8.5 5.48 10.57 11H6.43zm15.16.59l-8.09 8.09L9.83 16l-1.41 1.41 5.09 5.09L23 13l-1.41-1.41z"/></svg>
<svg class="abs" style="left:640.4px;top:121.5px" width="18" height="18" viewBox="0 0 24 24"><path fill="none" stroke="#444746" stroke-width="2" stroke-linecap="round" stroke-linejoin="round" d="M5 3.500h11a1 1 0 0 1 1 1v3a1 1 0 0 1-1 1H5a1 1 0 0 1-1-1v-3a1 1 0 0 1 1-1Z M17 6h3v5.500h-8v3 M10.500 14.500h3v6.500h-3Z"/></svg>
<div class="abs" style="left:674px;top:123.0px;font-size:13.4px;line-height:16px;color:#444746;white-space:nowrap;">100%</div>
<svg class="abs" style="left:716.6px;top:121.5px" width="18" height="18" viewBox="0 0 24 24"><path fill="#444746" d="M7 10l5 5 5-5z"/></svg>
<div class="abs" style="left:742.500px;top:121px;width:1px;height:20px;background:#c7c7c7"></div>
<div class="abs" style="left:756.5px;top:122.2px;font-size:14.3px;line-height:17px;color:#444746;white-space:nowrap;">Normal text</div>
<svg class="abs" style="left:839.4px;top:121.5px" width="18" height="18" viewBox="0 0 24 24"><path fill="#444746" d="M7 10l5 5 5-5z"/></svg>
<div class="abs" style="left:875px;top:122.2px;font-size:14.3px;line-height:17px;color:#444746;white-space:nowrap;">Arial</div>
<svg class="abs" style="left:933.6px;top:121.5px" width="18" height="18" viewBox="0 0 24 24"><path fill="#444746" d="M7 10l5 5 5-5z"/></svg>
<div class="abs" style="left:960.500px;top:121px;width:1px;height:20px;background:#c7c7c7"></div>
<svg class="abs" style="left:968.0px;top:122.5px" width="16" height="16" viewBox="0 0 24 24"><path fill="#444746" d="M19 13H5v-2h14v2z"/></svg>
<div class="abs" style="left:991.500px;top:119px;width:31.500px;height:22.500px;border:1px solid #80838a;border-radius:4px"></div>
<div class="abs" style="left:1000.5px;top:122.5px;font-size:13.5px;line-height:16px;color:#444746;white-space:nowrap;">11</div>
<svg class="abs" style="left:1028.5px;top:122.5px" width="16" height="16" viewBox="0 0 24 24"><path fill="#444746" d="M19 13h-6v6h-2v-6H5v-2h6V5h2v6h6v2z"/></svg>
<div class="abs" style="left:1053px;top:121px;width:1px;height:20px;background:#c7c7c7"></div>
<svg class="abs" style="left:1061.0px;top:121.0px" width="19" height="19" viewBox="0 0 24 24"><path fill="#444746" d="M15.6 10.79c.97-.67 1.65-1.77 1.65-2.79 0-2.26-1.75-4-4-4H7v14h7.04c2.09 0 3.71-1.7 3.71-3.79 0-1.52-.86-2.82-2.15-3.42zM10 6.5h3c.83 0 1.5.67 1.5 1.5s-.67 1.5-1.5 1.5h-3v-3zm3.5 9H10v-3h3.5c.83 0 1.5.67 1.5 1.5s-.67 1.5-1.5 1.5z"/></svg>
<svg class="abs" style="left:1091.0px;top:121.5px" width="18" height="18" viewBox="0 0 24 24"><path fill="#444746" d="M10 4v3h2.21l-3.42 8H6v3h8v-3h-2.21l3.42-8H18V4z"/></svg>
<svg class="abs" style="left:1122.0px;top:122.0px" width="18" height="18" viewBox="0 0 24 24"><path fill="#444746" d="M12 17c3.31 0 6-2.69 6-6V3h-2.5v8c0 1.93-1.57 3.5-3.5 3.5S8.5 12.930 8.5 11V3H6v8c0 3.31 2.69 6 6 6zm-7 2v2h14v-2H5z"/></svg>
<svg class="abs" style="left:1153.5px;top:119.5px" width="17" height="17" viewBox="0 0 24 24"><path fill="#444746" d="M11 3L5.5 17h2.25l1.12-3h6.25l1.12 3h2.25L13 3h-2zm-1.38 9L12 5.67 14.380 12H9.620z"/></svg>
<div class="abs" style="left:1152px;top:136.300px;width:20.500px;height:3.300px;background:#000"></div>
<svg class="abs" style="left:1185.5px;top:120.5px" width="17" height="17" viewBox="0 0 24 24"><path fill="none" stroke="#444746" stroke-width="2.2" stroke-linecap="round" stroke-linejoin="round" d="M6 18.500l.8-3.800L15.500 6a1.200 1.200 0 0 1 1.700 0l2 2a1.200 1.200 0 0 1 0 1.700L10.500 18.400l-4.500.100z M13 8.500l3.500 3.500"/></svg>
<div class="abs" style="left:1213px;top:121px;width:1px;height:20px;background:#c7c7c7"></div>
<svg class="abs" style="left:1223.0px;top:121.5px" width="18" height="18" viewBox="0 0 24 24"><path fill="#444746" d="M12 8c1.100 0 2-.9 2-2s-.9-2-2-2-2 .9-2 2 .9 2 2 2zm0 2c-1.100 0-2 .9-2 2s.9 2 2 2 2-.9 2-2-.9-2-2-2zm0 6c-1.100 0-2 .9-2 2s.9 2 2 2 2-.9 2-2-.9-2-2-2z"/></svg>
<svg class="abs" style="left:1322.0px;top:121.5px" width="18" height="18" viewBox="0 0 24 24"><path fill="none" stroke="#444746" stroke-width="2.2" stroke-linecap="round" stroke-linejoin="round" d="M4.500 19.500l1-4.300L16.800 3.900a1.200 1.200 0 0 1 1.700 0l1.600 1.600a1.200 1.200 0 0 1 0 1.700L8.800 18.500l-4.300 1z"/></svg>
<svg class="abs" style="left:1342.5px;top:121.5px" width="18" height="18" viewBox="0 0 24 24"><path fill="#444746" d="M7 10l5 5 5-5z"/></svg>
<div class="abs" style="left:1380px;top:121px;width:1px;height:20px;background:#c7c7c7"></div>
<svg class="abs" style="left:1388.5px;top:120.5px" width="20" height="20" viewBox="0 0 24 24"><path fill="#444746" d="M12 8l-6 6 1.410 1.410L12 10.830l4.590 4.580L18 14z"/></svg>
<div class="abs" style="left:473px;top:172px;width:953px;height:1px;background:#d4d7dc"></div>
<svg class="abs" style="left:0;top:0" width="1587" height="200"><path d="M557.8 168.5V172 M569.3 168.5V172 M580.8 168.5V172 M592.3 165.5V172 M603.8 168.5V172 M615.3 168.5V172 M626.8 168.5V172 M649.8 168.5V172 M661.3 168.5V172 M672.8 168.5V172 M684.3 165.5V172 M695.8 168.5V172 M707.3 168.5V172 M718.8 168.5V172 M741.7 168.5V172 M753.2 168.5V172 M764.7 168.5V172 M776.2 165.5V172 M787.7 168.5V172 M799.2 168.5V172 M810.7 168.5V172 M833.7 168.5V172 M845.2 168.5V172 M856.7 168.5V172 M868.2 165.5V172 M879.7 168.5V172 M891.2 168.5V172 M902.7 168.5V172 M925.6 168.5V172 M937.1 168.5V172 M948.6 168.5V172 M960.1 165.5V172 M971.6 168.5V172 M983.1 168.5V172 M994.6 168.5V172 M1017.6 168.5V172 M1029.1 168.5V172 M1040.6 168.5V172 M1052.1 165.5V172 M1063.6 168.5V172 M1075.1 168.5V172 M1086.6 168.5V172 M1109.5 168.5V172 M1121.0 168.5V172 M1132.5 168.5V172 M1144.0 165.5V172 M1155.5 168.5V172 M1167.0 168.5V172 M1178.5 168.5V172 M1201.5 168.5V172 M1213.0 168.5V172 M1224.5 168.5V172 M1236.0 165.5V172 M1247.5 168.5V172 M1259.0 168.5V172 M1270.5 168.5V172 M1293.4 168.5V172 M1304.9 168.5V172 M1316.4 168.5V172 M1327.9 165.5V172" stroke="#a4a7ad" stroke-width="1" fill="none"/></svg>
<div class="abs" style="left:536.3px;top:157px;width:20px;text-align:center;font-size:9.500px;line-height:11px;color:#5f6368">1</div>
<div class="abs" style="left:720.2px;top:157px;width:20px;text-align:center;font-size:9.500px;line-height:11px;color:#5f6368">1</div>
<div class="abs" style="left:812.2px;top:157px;width:20px;text-align:center;font-size:9.500px;line-height:11px;color:#5f6368">2</div>
<div class="abs" style="left:904.1px;top:157px;width:20px;text-align:center;font-size:9.500px;line-height:11px;color:#5f6368">3</div>
<div class="abs" style="left:996.1px;top:157px;width:20px;text-align:center;font-size:9.500px;line-height:11px;color:#5f6368">4</div>
<div class="abs" style="left:1088.0px;top:157px;width:20px;text-align:center;font-size:9.500px;line-height:11px;color:#5f6368">5</div>
<div class="abs" style="left:1180.0px;top:157px;width:20px;text-align:center;font-size:9.500px;line-height:11px;color:#5f6368">6</div>
<div class="abs" style="left:1271.9px;top:157px;width:20px;text-align:center;font-size:9.500px;line-height:11px;color:#5f6368">7</div>
<svg class="abs" style="left:632.3px;top:159px" width="12" height="12" viewBox="0 0 12 12"><path d="M0 0H12V4H0Z M1 5.500H11L6 11Z" fill="#4a8af4"/></svg>
<svg class="abs" style="left:1230.0px;top:163px" width="12" height="8" viewBox="0 0 12 8"><path d="M.5 .5H11.500L6 7Z" fill="#4a8af4"/></svg>
<div class="abs" style="left:488px;top:188px;width:34px;height:34px;border-radius:50%;background:#e7ecf5"></div>
<svg class="abs" style="left:497.5px;top:197.5px" width="15" height="15" viewBox="0 0 24 24"><path fill="#444746" d="M4 10.500c-.830 0-1.500.670-1.500 1.500s.670 1.500 1.500 1.500 1.500-.670 1.500-1.500-.670-1.500-1.500-1.500zm0-6c-.830 0-1.500.670-1.500 1.500S3.170 7.500 4 7.500 5.500 6.830 5.500 6 4.830 4.500 4 4.500zm0 12c-.830 0-1.500.680-1.500 1.500s.680 1.500 1.500 1.500 1.500-.680 1.500-1.500-.670-1.500-1.500-1.500zM7 19h14v-2H7v2zm0-6h14v-2H7v2zm0-8v2h14V5H7z"/></svg>
<div class="abs" style="left:1430px;top:294px;width:6.500px;height:224px;background:#dadce0;border-radius:3px"></div>
<div class="abs" style="left:1407px;top:621px;width:30px;height:60px;overflow:hidden"><div class="abs" style="left:10px;top:10.500px;width:39px;height:39px;border-radius:50%;background:#fff;box-shadow:0 1px 4px rgba(60,64,67,.4)"></div></div>
<svg class="abs" style="left:1423.0px;top:643.5px" width="15" height="15" viewBox="0 0 24 24"><path fill="#444746" d="M15.410 7.410L14 6l-6 6 6 6 1.410-1.410L10.830 12z"/></svg>
<!--SS-->
<svg class="abs" style="left:0;top:0" width="1587" height="948" viewBox="0 0 1587 948">
<defs>
<filter id="ds" x="-20%" y="-20%" width="140%" height="150%"><feGaussianBlur in="SourceAlpha" stdDeviation="2.200"/><feOffset dx="1.500" dy="3"/><feComponentTransfer><feFuncA type="linear" slope=".22"/></feComponentTransfer><feMerge><feMergeNode/><feMergeNode in="SourceGraphic"/></feMerge></filter>
<pattern id="hg" width="8" height="4.400" patternUnits="userSpaceOnUse" patternTransform="rotate(-4)"><path d="M-1 2.200H9" stroke="#2e8b57" stroke-width="1.250"/></pattern>
<pattern id="hk" width="4.700" height="8" patternUnits="userSpaceOnUse" patternTransform="rotate(14)"><path d="M2.300 -1V9" stroke="#111" stroke-width="1.200"/></pattern>
<pattern id="hb" width="4.300" height="8" patternUnits="userSpaceOnUse" patternTransform="rotate(28)"><path d="M2.100 -1V9" stroke="#3b47d6" stroke-width="1.100"/></pattern>
<pattern id="hr" width="3.600" height="8" patternUnits="userSpaceOnUse" patternTransform="rotate(45)"><path d="M1.800 -1V9" stroke="#e25555" stroke-width=".9"/></pattern>
<pattern id="hp" width="3.900" height="8" patternUnits="userSpaceOnUse" patternTransform="rotate(40)"><path d="M1.900 -1V9" stroke="#c94fc9" stroke-width="1"/></pattern>
<pattern id="hl" width="3.400" height="8" patternUnits="userSpaceOnUse" patternTransform="rotate(40)"><path d="M1.700 -1V9" stroke="#e6e6e6" stroke-width="1.200"/></pattern>
</defs>
<g filter="url(#ds)"><path d="M661.0 217.8 L721.6 278.8 L728.2 272.5 L739.6 309.3 L704.9 295.0 L709.1 290.8 L648.8 228.8Z" fill="#f4faf6" stroke="#2e8b57" stroke-width="1.5" stroke-linejoin="round" /><path d="M661.0 217.8 L721.6 278.8 L728.2 272.5 L739.6 309.3 L704.9 295.0 L709.1 290.8 L648.8 228.8Z" fill="url(#hg)" stroke="none" stroke-width="0" stroke-linejoin="round" /><path d="M661.0 217.8 L721.6 278.8 L728.2 272.5 L739.6 309.3 L704.9 295.0 L709.1 290.8 L648.8 228.8Z" fill="none" stroke="#2e8b57" stroke-width="1.6" stroke-linejoin="round" /><path d="M660.7 217.2 L721.8 278.1 L728.3 272.3 L738.9 309.3 L704.2 294.9 L708.4 290.1 L648.7 229.3Z" fill="none" stroke="#2e8b57" stroke-width="0.7" stroke-linejoin="round" /></g>
<g filter="url(#ds)"><path d="M572.9 344.7 L727.0 344.7 L727.0 331.8 L761.6 359.5 L727.0 386.8 L727.0 374.1 L572.9 374.1Z" fill="#fff" stroke="#d022d0" stroke-width="1.5" stroke-linejoin="round" /><path d="M572.2 344.2 L727.2 345.5 L727.1 331.6 L762.5 358.7 L727.6 386.4 L726.4 373.4 L572.6 374.7Z" fill="none" stroke="#d64ad6" stroke-width="0.8" stroke-linejoin="round" /></g>
<g filter="url(#ds)"><path d="M636.9 471.9 L711.9 419.1 L706.2 412.6 L745.1 407.7 L727.4 442.4 L721.4 436.2 L646.4 486.7Z" fill="#f2f2f2" stroke="#111" stroke-width="1.5" stroke-linejoin="round" /><path d="M636.9 471.9 L711.9 419.1 L706.2 412.6 L745.1 407.7 L727.4 442.4 L721.4 436.2 L646.4 486.7Z" fill="url(#hk)" stroke="none" stroke-width="0" stroke-linejoin="round" /><path d="M636.9 471.9 L711.9 419.1 L706.2 412.6 L745.1 407.7 L727.4 442.4 L721.4 436.2 L646.4 486.7Z" fill="none" stroke="#111" stroke-width="1.3" stroke-linejoin="round" /><path d="M636.3 472.0 L712.2 418.9 L706.3 411.8 L744.3 407.2 L727.7 442.3 L721.1 436.4 L646.3 486.3Z" fill="none" stroke="#111" stroke-width="0.7" stroke-linejoin="round" /></g>
<g filter="url(#ds)"><rect x="840.500" y="214" width="68" height="67" rx="15" fill="#b9bdc3"/><rect x="846" y="219.700" width="58" height="55.500" rx="11" fill="#23272d"/><circle cx="862.100" cy="248.800" r="11" fill="#ff1a3c"/><path d="M879.300 256.300 L893.800 236.900" stroke="#fff" stroke-width="7.200" stroke-linecap="round"/></g>
<g filter="url(#ds)"><g transform="translate(1052.500,303) rotate(-53.400)"><path d="M0 0 C3 -4 6 -7 10 -8.500 C15 -10.500 20 -12 25 -13 C31 -14.200 36 -15 42 -15 C50 -15.200 57 -15.200 64 -15 C72 -14.700 79 -14 86 -13 C93 -12 98 -11 103 -9 C108 -7 112 -4.500 114 -1.500 C115.500 1 114.500 3 112 4.500 C110 6 108.500 7 107 7.500 C104 9.500 101 11 98 12 C95 13.500 92 14.500 88 15 L80 12.500 C76 15 71 18 66 19 L58 14 C55 16 51 17.500 48 18 L42 13.500 C40 15.500 37 17 35 17.500 L28 12.500 C26 13.500 23 14.500 20 14.500 L13 9.500 C11.500 9.500 9.500 9 8 8 L3 4 Z" fill="#050505"/><path d="M3 -4 L-5 -9 M1 -2 L-9 -4.500 M5 -6 L0 -12 M3 3.500 L-4 8" stroke="#050505" stroke-width="1.500" stroke-linecap="round"/><path d="M1 0 Q-9 1 -18 5.500" stroke="#050505" stroke-width="1.600" stroke-linecap="round" fill="none"/><path d="M0 0 C30 -3 70 -5 111 -1.500" stroke="#d0d0d0" stroke-width=".9" fill="none"/></g></g>
<g filter="url(#ds)"><path d="M1157.8 375.7 L1192.3 364.8 L1192.3 369.6 L1253.7 369.6 L1253.7 382.3 L1192.3 382.3 L1192.3 387.8Z" fill="#eef0ff" stroke="#e01818" stroke-width="1.3" stroke-linejoin="round" /><path d="M1157.8 375.7 L1192.3 364.8 L1192.3 369.6 L1253.7 369.6 L1253.7 382.3 L1192.3 382.3 L1192.3 387.8Z" fill="url(#hb)" stroke="none" stroke-width="0" stroke-linejoin="round" /><path d="M1157.8 375.7 L1192.3 364.8 L1192.3 369.6 L1253.7 369.6 L1253.7 382.3 L1192.3 382.3 L1192.3 387.8Z" fill="none" stroke="#e01818" stroke-width="1.5" stroke-linejoin="round" /><path d="M1158.4 376.1 L1191.8 364.9 L1192.4 370.4 L1254.2 369.2 L1254.7 381.5 L1192.1 382.8 L1191.6 387.8Z" fill="none" stroke="#e01818" stroke-width="0.8" stroke-linejoin="round" /></g>
<g filter="url(#ds)"><path d="M846 425.200 L853 416.200 L860 425.200Z" fill="#e01515" stroke="#e01515" stroke-width="1" stroke-linejoin="round"/><rect x="822" y="424.800" width="140.700" height="56.800" rx="10.500" fill="#fbfbfb"/><rect x="822" y="424.800" width="140.700" height="56.800" rx="10.500" fill="url(#hl)"/><rect x="822" y="424.800" width="140.700" height="56.800" rx="10.500" fill="none" stroke="#e01515" stroke-width="1.400"/><rect x="822.600" y="425.600" width="139.800" height="55.600" rx="10" fill="none" stroke="#e01515" stroke-width=".6"/></g>
<g filter="url(#ds)"><path d="M1012.500 439.800 L1003.300 445 L1012.500 451.300Z" fill="#111" stroke="#111" stroke-width="1" stroke-linejoin="round"/><rect x="1011.900" y="428.700" width="129.200" height="47.400" rx="8" fill="#fff" stroke="#111" stroke-width="1.500"/><rect x="1012.800" y="429.400" width="128" height="46.200" rx="7.500" fill="none" stroke="#111" stroke-width=".6"/></g>
<g filter="url(#ds)"><rect x="589.200" y="534.600" width="78" height="71.300" rx="10" fill="#fff" stroke="#dd1515" stroke-width="1.400"/><rect x="589.800" y="535.300" width="77" height="70" rx="9.500" fill="none" stroke="#dd1515" stroke-width=".6"/></g>
<g filter="url(#ds)"><rect x="709" y="536.300" width="115" height="67" fill="#fdeeee"/><rect x="709" y="536.300" width="115" height="67" fill="url(#hr)"/><rect x="709" y="536.300" width="115" height="67" fill="none" stroke="#111" stroke-width="1.700"/></g>
<g filter="url(#ds)"><path d="M953.5 570.5 L953.4 577.1 L953.0 581.3 L952.5 584.9 L951.7 588.1 L950.7 590.9 L949.4 593.5 L948.0 595.9 L946.3 598.1 L944.4 600.0 L942.3 601.7 L939.9 603.3 L937.3 604.6 L934.4 605.7 L931.3 606.7 L927.8 607.4 L923.9 607.9 L919.3 608.2 L912.0 608.3 L904.7 608.2 L900.1 607.9 L896.2 607.4 L892.7 606.7 L889.6 605.7 L886.7 604.6 L884.1 603.3 L881.7 601.7 L879.6 600.0 L877.7 598.1 L876.0 595.9 L874.6 593.5 L873.3 590.9 L872.3 588.1 L871.5 584.9 L871.0 581.3 L870.6 577.1 L870.5 570.5 L870.6 563.9 L871.0 559.7 L871.5 556.1 L872.3 552.9 L873.3 550.1 L874.6 547.5 L876.0 545.1 L877.7 542.9 L879.6 541.0 L881.7 539.3 L884.1 537.7 L886.7 536.4 L889.6 535.3 L892.7 534.3 L896.2 533.6 L900.1 533.1 L904.7 532.8 L912.0 532.7 L919.3 532.8 L923.9 533.1 L927.8 533.6 L931.3 534.3 L934.4 535.3 L937.3 536.4 L939.9 537.7 L942.3 539.3 L944.4 541.0 L946.3 542.9 L948.0 545.1 L949.4 547.5 L950.7 550.1 L951.7 552.9 L952.5 556.1 L953.0 559.7 L953.4 563.9Z" fill="#fff" stroke="#1a28b8" stroke-width="1.4" stroke-linejoin="round" /><path d="M953.2 570.6 L953.6 577.2 L953.3 581.2 L952.6 585.0 L951.8 588.0 L950.9 591.2 L949.4 593.7 L947.7 596.1 L946.4 598.4 L944.6 599.9 L942.2 601.9 L939.6 603.3 L937.1 604.3 L934.1 605.9 L931.0 606.5 L927.7 607.6 L923.6 607.9 L919.3 608.5 L912.2 608.6 L904.6 608.1 L900.0 608.2 L896.5 607.1 L892.5 606.5 L889.4 605.7 L886.8 604.4 L883.8 603.2 L881.6 601.8 L879.9 600.1 L877.7 598.1 L876.1 595.6 L874.8 593.7 L873.6 591.1 L872.2 588.0 L871.2 585.0 L870.6 581.0 L870.4 576.9 L870.4 570.2 L870.3 563.6 L870.7 559.6 L871.2 556.4 L872.4 552.7 L873.1 550.0 L874.5 547.2 L876.3 545.4 L877.7 542.9 L879.3 540.7 L881.6 539.1 L884.3 537.5 L886.4 536.7 L889.6 535.0 L892.7 534.0 L896.2 534.0 L900.4 533.2 L904.6 532.7 L911.8 532.9 L919.3 533.0 L923.8 532.9 L928.0 534.0 L931.5 534.6 L934.7 535.4 L937.1 536.4 L939.8 537.4 L941.9 539.1 L944.2 541.1 L946.6 542.9 L948.3 545.4 L949.8 547.4 L950.5 549.9 L951.5 552.7 L952.6 556.4 L953.3 559.7 L953.5 564.1Z" fill="none" stroke="#1a28b8" stroke-width="0.5" stroke-linejoin="round" /></g>
<g filter="url(#ds)"><rect x="990.700" y="536.200" width="95.700" height="71.500" rx="26" ry="24" fill="#faeefa"/><rect x="990.700" y="536.200" width="95.700" height="71.500" rx="26" ry="24" fill="url(#hp)"/><rect x="990.700" y="536.200" width="95.700" height="71.500" rx="26" ry="24" fill="none" stroke="#e9a11e" stroke-width="1.900"/></g>
<g filter="url(#ds)"><path d="M1160.0 524.4 L1170.6 555.6 L1203.5 555.7 L1177.0 575.2 L1187.0 606.0 L1160.0 587.2 L1133.5 606.0 L1143.0 575.2 L1117.0 555.7 L1149.4 555.6Z" fill="#fff" stroke="#e01515" stroke-width="1.4" stroke-linejoin="round" /><path d="M1159.3 524.7 L1171.3 556.1 L1203.9 555.7 L1176.5 575.7 L1186.7 606.5 L1160.8 587.0 L1133.3 606.7 L1143.4 574.7 L1116.4 555.1 L1150.0 556.1Z" fill="none" stroke="#e01515" stroke-width="0.6" stroke-linejoin="round" /></g>
<g filter="url(#ds)"><path d="M1269.0 533.4 L1310.0 604.0 L1230.0 604.0Z" fill="#fff" stroke="#2ad62a" stroke-width="1.5" stroke-linejoin="round" /><path d="M1268.4 533.9 L1310.8 604.3 L1229.8 604.1Z" fill="none" stroke="#2ad62a" stroke-width="0.6" stroke-linejoin="round" /></g>
</svg>
<div class="abs hw" style="left:583px;top:350.5px;font-size:14.5px;line-height:17px;color:#cc22cc;white-space:nowrap;letter-spacing:.77px">arrow with some text</div>
<div class="abs hw" style="left:821px;top:306.5px;font-size:24.5px;line-height:29px;color:#0a0a0a;white-space:nowrap;letter-spacing:1.15px">Stickers / Shapes</div>
<div class="abs hw" style="left:796px;top:364px;font-size:18.5px;line-height:22px;color:#d11a1a;white-space:nowrap;letter-spacing:.3px">Hand drawn style shapes and text</div>
<div class="abs hw" style="left:831.5px;top:442px;font-size:16.6px;line-height:20px;color:#d11a1a;white-space:nowrap;letter-spacing:-.1px;font-family:'Liberation Sans',sans-serif">Bubble Message</div>
<div class="abs hw" style="left:1030.5px;top:439px;font-size:17px;line-height:20px;color:#0a0a0a;white-space:nowrap;font-style:italic;letter-spacing:-.1px;font-family:'Liberation Sans',sans-serif">Cool Bubble</div>
<!--SE-->
</div>
<!--DE-->
</div>

<!-- ================= CONTROLS ================= -->
<div id="ctl"></div>
<svg class="abs" style="left:333px;top:706px" width="16" height="18" viewBox="0 0 16 18"><path d="M2.500 2.200 L13.500 9 L2.500 15.800 Z" fill="#fff" stroke="#fff" stroke-width="2.400" stroke-linejoin="round"/></svg>
<div class="ct mono" style="left:365px;top:707px;font-size:12px;color:#f2f2f2">6.0s / 27.1s</div>
<div class="ct" style="left:468px;top:707px;font-size:13px;color:#9a9a9a">Speed:</div>
<div class="abs" style="left:515px;top:701px;width:67px;height:27px;background:#262626;border:1px solid #3c3c3c;border-radius:4px"></div>
<div class="ct" style="left:528px;top:707px;font-size:13px;color:#f2f2f2">1x</div>
<svg class="ic" style="left:566px;top:708px;width:13px;height:13px;color:#fff;stroke-width:3" viewBox="0 0 24 24"><path d="m6 9 6 6 6-6"/></svg>
<div class="ct mono" style="left:598px;top:707px;font-size:12px;color:#c98b3c">Target: 6.0s / 27.1s</div>
<div class="ct" style="left:1104px;top:707px;font-size:13px;color:#9a9a9a">Zoom:</div>
<div class="ct mono" style="left:1156px;top:707px;font-size:12px;color:#e0e0e0;font-weight:700">-</div>
<div class="abs" style="left:1187px;top:713px;width:73px;height:4px;background:#2e2e2e;border:1px solid #8a8a8a;border-radius:2px"></div>
<div class="abs" style="left:1180px;top:707px;width:15px;height:15px;background:#e0950f;border-radius:50%"></div>
<div class="ct mono" style="left:1276px;top:707px;font-size:12px;color:#e0e0e0;font-weight:700">+</div>
<div class="ct mono" style="left:1307px;top:707px;font-size:12px;color:#f2f2f2">1.0x</div>
<svg class="ic" style="left:1360px;top:708px;width:13px;height:13px;color:#a8a8a8" viewBox="0 0 24 24"><circle cx="6" cy="6" r="3"/><path d="M8.100 8.100 12 12"/><path d="M20 4 8.100 15.900"/><circle cx="6" cy="18" r="3"/><path d="M14.800 14.800 20 20"/></svg>
<div class="ct" style="left:1383px;top:707px;font-size:12.5px;color:#a8a8a8">Trim Mode Active</div>
<svg class="ic" style="left:1510px;top:707px;width:15px;height:15px;color:#a8a8a8" viewBox="0 0 24 24"><path d="M15.2 3a2 2 0 0 1 1.400.6l3.800 3.800a2 2 0 0 1 .6 1.400V19a2 2 0 0 1-2 2H5a2 2 0 0 1-2-2V5a2 2 0 0 1 2-2z"/><path d="M17 21v-7a1 1 0 0 0-1-1H8a1 1 0 0 0-1 1v7"/><path d="M7 3v4a1 1 0 0 0 1 1h7"/></svg>
<div class="ct" style="left:1535px;top:706px;font-size:14.5px;line-height:18px;color:#a8a8a8">Save</div>

<!-- ================= TIMELINE ================= -->
<!--TLS-->
<div class="tick" style="left:423.4px"></div><div class="tl" style="left:428.9px;margin-top:.500px">00:00</div>
<div class="tick" style="left:508.7px"></div><div class="tl" style="left:514.2px;margin-top:.500px">00:02</div>
<div class="tick" style="left:594.0px"></div><div class="tl" style="left:599.5px;margin-top:.500px">00:04</div>
<div class="tick" style="left:679.4px"></div><div class="tl" style="left:684.9px;margin-top:.500px">00:06</div>
<div class="tick" style="left:764.7px"></div><div class="tl" style="left:770.2px;margin-top:.500px">00:08</div>
<div class="tick" style="left:850.0px"></div><div class="tl" style="left:855.5px;margin-top:.500px">00:10</div>
<div class="tick" style="left:935.3px"></div><div class="tl" style="left:940.8px;margin-top:.500px">00:12</div>
<div class="tick" style="left:1020.6px"></div><div class="tl" style="left:1026.1px;margin-top:.500px">00:14</div>
<div class="tick" style="left:1106.0px"></div><div class="tl" style="left:1111.5px;margin-top:.500px">00:16</div>
<div class="tick" style="left:1191.3px"></div><div class="tl" style="left:1196.8px;margin-top:.500px">00:18</div>
<div class="tick" style="left:1276.6px"></div><div class="tl" style="left:1282.1px;margin-top:.500px">00:20</div>
<div class="tick" style="left:1361.9px"></div><div class="tl" style="left:1367.4px;margin-top:.500px">00:22</div>
<div class="tick" style="left:1447.2px"></div><div class="tl" style="left:1452.7px;margin-top:.500px">00:24</div>
<div class="tick" style="left:1532.6px"></div><div class="tl" style="left:1538.1px;margin-top:.500px">00:26</div>
<div class="abs" style="left:424px;top:770px;width:1155px;height:1px;background:#2a2a2a"></div>
<div class="abs" style="left:424px;top:852px;width:1155px;height:1px;background:#2a2a2a"></div>
<div class="abs" style="left:424px;top:880px;width:1155px;height:1px;background:#2a2a2a"></div>
<div class="abs" style="left:424px;top:782px;width:1154px;height:36px;background:#d1d1d1;overflow:hidden"><div class="abs" style="left:0;top:0;width:1154px;height:8px;background:repeating-linear-gradient(90deg,#cfcfcf 0,#c4c6c9 9px,#d8d8d8 14px,#b9bcc2 27px,#a9adb5 30px,#c8c8c8 33px,#d2d2d2 41.3px)"></div><div class="abs" style="left:0;top:8px;width:1154px;height:28px;background:repeating-linear-gradient(90deg,rgba(0,0,0,0) 0,rgba(0,0,0,0) 38.8px,#c3ccd6 39.3px,#dfe3e8 40.6px,rgba(0,0,0,0) 41.3px)"></div></div>
<div class="clip" style="left:426px;width:296px"><i style="position:absolute;left:0px;top:-1px;width:6px;height:17px;background:#5a3c06;border-left:1px solid rgba(240,181,69,.55);border-radius:3px 0 0 3px"></i><i style="position:absolute;left:6px;top:-1px;width:12px;height:17px;background:#8a5c08;border-left:1px solid rgba(240,181,69,.55);border-radius:3px 0 0 3px"></i><i style="position:absolute;left:18px;top:-1px;width:22px;height:17px;background:#a87008;border-left:1px solid rgba(240,181,69,.55);border-radius:3px 0 0 3px"></i><i style="position:absolute;left:40px;top:-1px;width:20px;height:17px;background:#bd7e0a;border-left:1px solid rgba(240,181,69,.55);border-radius:3px 0 0 3px"></i><i style="position:absolute;left:60px;top:-1px;width:30px;height:17px;background:#c9860a;border-left:1px solid rgba(240,181,69,.55);border-radius:3px 0 0 3px"></i><i style="position:absolute;left:90px;top:-1px;width:40px;height:17px;background:#d08b0b;border-left:1px solid rgba(240,181,69,.55);border-radius:3px 0 0 3px"></i><span style="position:absolute;left:165px;top:1px;font-size:9.5px;line-height:13px;color:rgba(255,214,120,.55);white-space:nowrap;letter-spacing:.2px">arrow &nbsp; Image &nbsp;Image</span></div>
<div class="clip" style="left:743px;width:214px"><i style="position:absolute;left:0px;top:-1px;width:8px;height:17px;background:#5a3c06;border-left:1px solid rgba(240,181,69,.55);border-radius:3px 0 0 3px"></i><i style="position:absolute;left:8px;top:-1px;width:14px;height:17px;background:#8a5c08;border-left:1px solid rgba(240,181,69,.55);border-radius:3px 0 0 3px"></i><i style="position:absolute;left:22px;top:-1px;width:20px;height:17px;background:#a87008;border-left:1px solid rgba(240,181,69,.55);border-radius:3px 0 0 3px"></i><i style="position:absolute;left:42px;top:-1px;width:28px;height:17px;background:#bd7e0a;border-left:1px solid rgba(240,181,69,.55);border-radius:3px 0 0 3px"></i><i style="position:absolute;left:70px;top:-1px;width:40px;height:17px;background:#cc880b;border-left:1px solid rgba(240,181,69,.55);border-radius:3px 0 0 3px"></i><span style="position:absolute;left:120px;top:1px;font-size:9.5px;line-height:13px;color:rgba(255,214,120,.55);white-space:nowrap;letter-spacing:.2px">arrow &nbsp; Image &nbsp;Image</span></div>
<div class="clip" style="left:978px;width:214px"><i style="position:absolute;left:0px;top:-1px;width:9px;height:17px;background:#5a3c06;border-left:1px solid rgba(240,181,69,.55);border-radius:3px 0 0 3px"></i><i style="position:absolute;left:9px;top:-1px;width:13px;height:17px;background:#8a5c08;border-left:1px solid rgba(240,181,69,.55);border-radius:3px 0 0 3px"></i><i style="position:absolute;left:22px;top:-1px;width:12px;height:17px;background:#a87008;border-left:1px solid rgba(240,181,69,.55);border-radius:3px 0 0 3px"></i><i style="position:absolute;left:34px;top:-1px;width:26px;height:17px;background:#bd7e0a;border-left:1px solid rgba(240,181,69,.55);border-radius:3px 0 0 3px"></i><i style="position:absolute;left:60px;top:-1px;width:40px;height:17px;background:#cc880b;border-left:1px solid rgba(240,181,69,.55);border-radius:3px 0 0 3px"></i><span style="position:absolute;left:85px;top:1px;font-size:9.5px;line-height:13px;color:rgba(255,214,120,.55);white-space:nowrap;letter-spacing:.2px">arrow &nbsp; Image &nbsp;Image</span></div>
<div class="abs" style="left:423px;top:770px;width:2px;height:164px;background:#e2a63a"></div>
<div class="abs" style="left:1577px;top:770px;width:2px;height:164px;background:#e2a63a"></div>
<div class="abs" style="left:418px;top:833px;width:10px;height:39px;background:#e3a511;border-radius:4px"><i style="position:absolute;left:4px;top:14px;width:2px;height:11px;background:#7a5608"></i></div>
<div class="abs" style="left:1574px;top:833px;width:10px;height:39px;background:#e3a511;border-radius:4px"><i style="position:absolute;left:4px;top:14px;width:2px;height:11px;background:#7a5608"></i></div>
<div class="abs" style="left:680px;top:744px;width:2px;height:190px;background:#f5f5f5"></div>
<div class="abs" style="left:677px;top:739px;width:8px;height:11px;background:#fff;border-radius:2px 2px 4px 4px"><i style="position:absolute;left:2px;top:2px;width:4px;height:6px;background:#666;border-radius:1px 1px 2px 2px"></i></div>
<svg class="ic" style="left:331px;top:784px;width:12px;height:12px;color:#f0f0f0" viewBox="0 0 24 24"><rect x="2" y="3" width="20" height="14" rx="2"/><path d="M8 21h8"/><path d="M12 17v4"/></svg>
<div class="abs" style="left:347px;top:783px;font-size:12.5px;line-height:15px;color:#f0f0f0">Screen</div>
<svg class="ic" style="left:331px;top:803px;width:13px;height:13px;color:#c8c8c8;stroke-width:1.8" viewBox="0 0 24 24"><path d="M11 4.700a.7.7 0 0 0-1.200-.5L6.400 7.600A1.400 1.400 0 0 1 5.400 8H3a1 1 0 0 0-1 1v6a1 1 0 0 0 1 1h2.400a1.400 1.400 0 0 1 1 .4l3.400 3.400a.7.7 0 0 0 1.200-.5z"/><path d="M16 9a5 5 0 0 1 0 6"/><path d="M19.400 18.400a9 9 0 0 0 0-12.700"/></svg>
<div class="abs" style="left:350px;top:808px;width:30px;height:4px;background:#a6a6a6;border-radius:2px"></div>
<div class="abs" style="left:373px;top:802px;width:15px;height:15px;background:#a3a3a3;border-radius:50%"></div>
<svg class="ic" style="left:331px;top:830px;width:14px;height:14px;color:#f0f0f0" viewBox="0 0 24 24"><circle cx="11" cy="11" r="8"/><path d="m21 21-4.300-4.300"/><path d="M11 8v6"/><path d="M8 11h6"/></svg>
<svg class="ic" style="left:331px;top:862px;width:14px;height:14px;color:#f0f0f0" viewBox="0 0 24 24"><path d="M15.500 3H5a2 2 0 0 0-2 2v14c0 1.100.9 2 2 2h14a2 2 0 0 0 2-2V8.500L15.500 3Z"/><path d="M14 3v4a2 2 0 0 0 2 2h4"/><path d="M8 13h.01"/><path d="M16 13h.01"/><path d="M10 16s.8 1 2 1c1.300 0 2-1 2-1"/></svg>
<!--TLE-->

</div>
</body>
</html>
